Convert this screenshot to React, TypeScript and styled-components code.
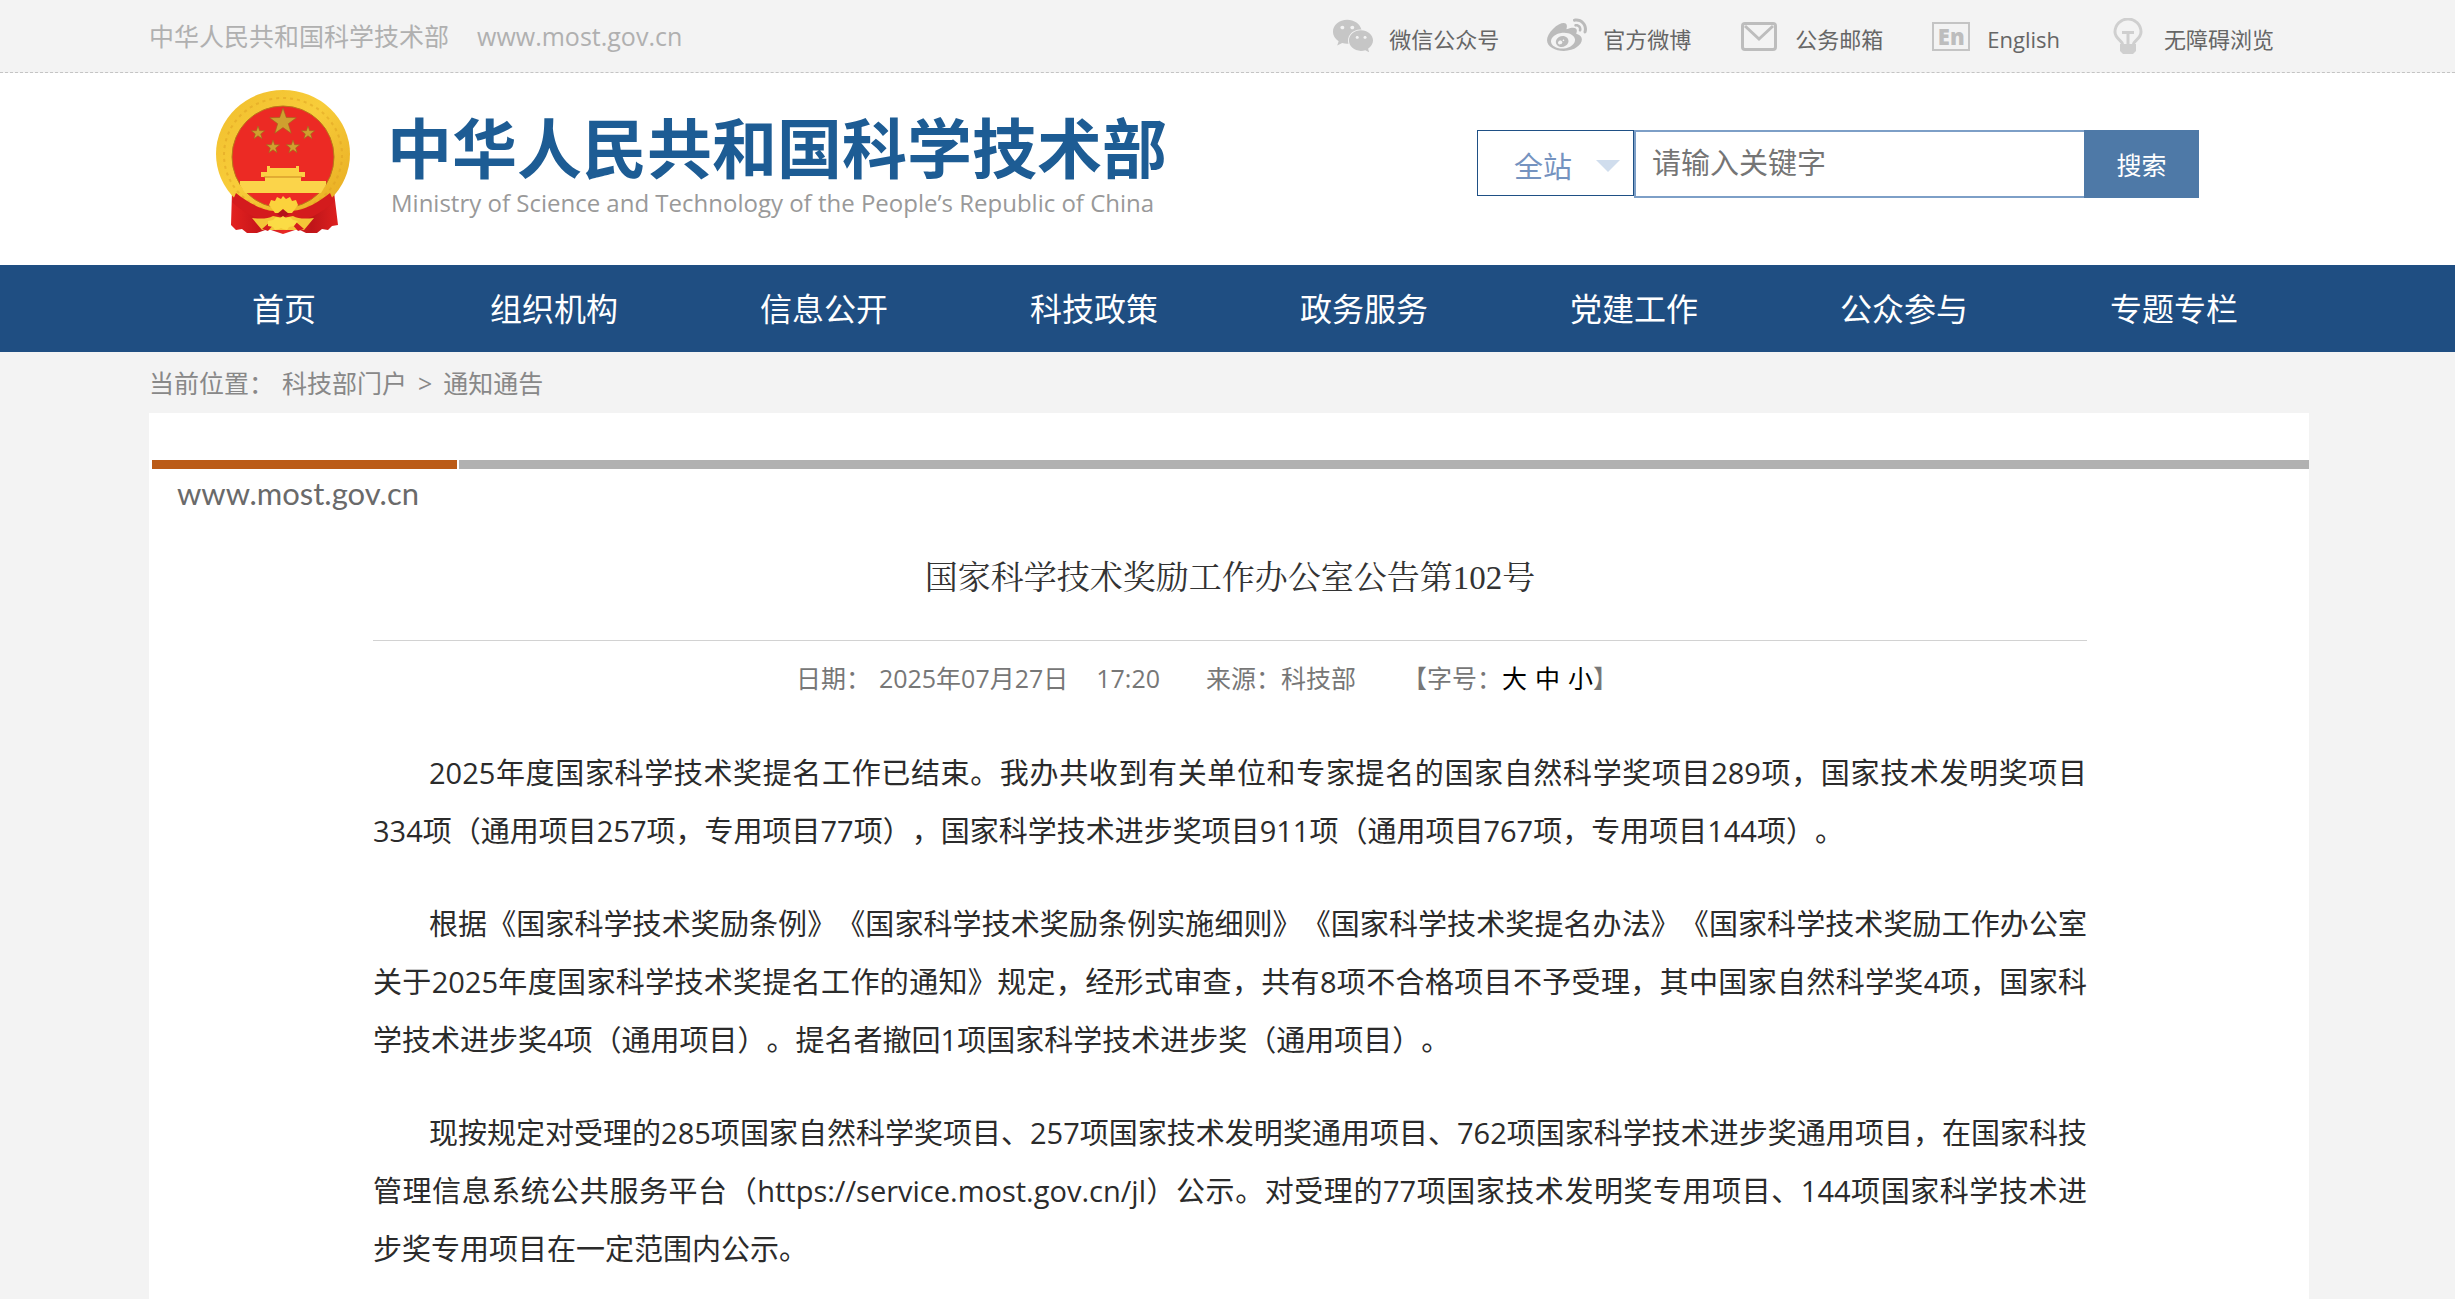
import React from "react";
import styled, { createGlobalStyle } from "styled-components";
import { FaWeibo, FaWeixin } from "react-icons/fa";

const sans = `"Open Sans", "Noto Sans CJK SC", sans-serif`;

const GlobalStyle = createGlobalStyle`
  *, *::before, *::after { box-sizing: border-box; }
  body {
    margin: 0;
    background: #f3f3f3;
    color: #2b2b2b;
    font-family: ${sans};
    text-spacing-trim: space-all;
  }
  a { color: inherit; text-decoration: none; }
  button, input, select { font-family: inherit; }
`;

const Page = styled.div`
  display: flex;
  flex-direction: column;
  min-height: 100vh;
`;

const gutter = `
  padding-left: 149px;
  padding-right: 146px;
`;

const TopBar = styled.div`
  ${gutter}
  display: flex;
  justify-content: space-between;
  align-items: center;
  height: 73px;
  border-bottom: 1px dashed #c4c4c4;
`;

const SiteName = styled.div`
  display: flex;
  gap: 28px;
  font-size: 25px;
  line-height: 36px;
  color: #b0b0b0;
`;

const QuickLinks = styled.nav`
  display: flex;
  gap: 48px;
  padding-right: 35px;
`;

const QuickLink = styled.a`
  display: flex;
  align-items: center;
  gap: 16px;
  font-size: 22px;
  line-height: 32px;
  color: #666;

  span.label { padding-top: 6px; }
`;

const IconBox = styled.span<{ $tone: string }>`
  display: flex;
  justify-content: center;
  width: 40px;
  color: ${(p) => p.$tone};

  svg { flex: none; }
`;

const EnBadge = styled.span`
  display: flex;
  justify-content: center;
  align-items: center;
  width: 38px;
  height: 29px;
  border: 2px solid #c4c4c4;
  color: #bdbdbd;
  font-size: 22px;
  font-weight: 800;
  line-height: 22px;
`;

const Header = styled.header`
  display: flex;
  justify-content: space-between;
  align-items: flex-start;
  padding: 17px 256px 31px 216px;
  background: #fff;
`;

const Brand = styled.a`
  display: flex;
  gap: 37px;
`;

const BrandText = styled.div`
  display: flex;
  flex-direction: column;
  padding-top: 17px;
`;

const BrandName = styled.span`
  font-family: "Noto Sans CJK SC", sans-serif;
  font-size: 65px;
  line-height: 76px;
  font-weight: 700;
  color: #1d5c94;
  white-space: nowrap;
`;

const BrandEnglish = styled.span`
  padding-left: 4px;
  font-size: 24px;
  line-height: 40px;
  color: #999;
  white-space: nowrap;
`;

const SearchForm = styled.form`
  display: flex;
  align-items: flex-start;
  padding-top: 40px;
`;

const ScopeField = styled.label`
  position: relative;
  display: block;

  &::after {
    content: "";
    position: absolute;
    top: 30px;
    right: 14px;
    border: 12px solid transparent;
    border-top-color: #d0dded;
    border-bottom-width: 0;
    pointer-events: none;
  }
`;

const ScopeSelect = styled.select`
  appearance: none;
  display: block;
  width: 157px;
  height: 66px;
  padding: 6px 0 0 36px;
  border: 1px solid #1f5085;
  border-radius: 0;
  background: #fff;
  color: #7593c0;
  font-size: 29px;
`;

const SearchInput = styled.input`
  width: 450px;
  height: 68px;
  padding: 0 16px 4px;
  border: 2px solid #7d9fc7;
  border-right: 0;
  border-radius: 0;
  font-size: 29px;
  color: #444;

  &::placeholder { color: #757575; }
`;

const SearchButton = styled.button`
  width: 115px;
  height: 68px;
  padding: 0;
  border: 0;
  background: #4e79a7;
  color: #fff;
  font-size: 25px;
`;

const MainNav = styled.nav`
  ${gutter}
  display: flex;
  background: #1f4e82;

  a {
    flex: 1;
    padding: 2px 0 1px;
    text-align: center;
    font-size: 32px;
    line-height: 84px;
    color: #fff;
  }
`;

const Breadcrumb = styled.nav`
  ${gutter}
  display: flex;
  gap: 11px;
  padding-top: 1px;
  font-size: 25px;
  line-height: 60px;
  color: #888;

  span:first-child { margin-right: -3px; }
`;

const Main = styled.main`
  ${gutter}
  display: flex;
  flex: 1;
`;

const Card = styled.article`
  flex: 1;
  padding: 47px 0 20px;
  background: #fff;
`;

const Stripe = styled.div`
  display: flex;
  gap: 2px;
  height: 9px;
  padding-left: 3px;
`;

const StripePart = styled.span<{ $accent?: boolean }>`
  flex: ${(p) => (p.$accent ? "0 0 305px" : "1")};
  background: ${(p) => (p.$accent ? "#bb5b17" : "#b1b1b1")};
`;

const Domain = styled.div`
  padding: 6px 0 0 28px;
  font-family: Lato, sans-serif;
  font-size: 31px;
  line-height: 36px;
  color: #6a6a6a;
`;

const Content = styled.div`
  padding: 0 222px 0 224px;
`;

const Title = styled.h1`
  margin: 0;
  padding: 42px 0 37px;
  border-bottom: 1px solid #d2d2d2;
  text-align: center;
  font-family: "Liberation Serif", "Noto Serif CJK SC", "Noto Sans CJK SC", serif;
  font-size: 33px;
  font-weight: 400;
  line-height: 50px;
  color: #333;
`;

const Meta = styled.div`
  display: flex;
  justify-content: center;
  gap: 46px;
  padding: 18px 46px 0 0;
  font-size: 25px;
  line-height: 38px;
  color: #777;
`;

const MetaGroup = styled.span<{ $gap?: number }>`
  display: flex;
  gap: ${(p) => p.$gap ?? 0}px;
`;

const SizeButton = styled.button`
  padding: 0;
  border: 0;
  background: none;
  font-size: 25px;
  line-height: 38px;
  color: #000;
`;

const Body = styled.div`
  padding-top: 47px;
`;

const Paragraph = styled.p`
  margin: 0 0 35px;
  text-indent: 56px;
  text-align: justify;
  font-size: 29px;
  line-height: 58px;
  color: #2b2b2b;

  &:last-child { margin-bottom: 0; }
`;

const starPoints = (cx: number, cy: number, r: number) =>
  Array.from({ length: 10 }, (_, i) => {
    const radius = i % 2 ? r * 0.4 : r;
    const angle = (Math.PI * i) / 5 - Math.PI / 2;
    return `${(cx + radius * Math.cos(angle)).toFixed(1)},${(cy + radius * Math.sin(angle)).toFixed(1)}`;
  }).join(" ");

const Emblem = () => (
  <svg width="134" height="144" viewBox="0 0 134 144" aria-hidden="true">
    <defs>
      <linearGradient id="gold" x1="0" y1="0" x2="1" y2="1">
        <stop offset="0" stopColor="#f0bd2c" />
        <stop offset="0.45" stopColor="#f8cd3a" />
        <stop offset="1" stopColor="#e6a81f" />
      </linearGradient>
      <linearGradient id="drape" x1="0" y1="0" x2="1" y2="0">
        <stop offset="0" stopColor="#e3211f" />
        <stop offset="0.3" stopColor="#c4141a" />
        <stop offset="0.5" stopColor="#ea2a24" />
        <stop offset="0.75" stopColor="#bf1519" />
        <stop offset="1" stopColor="#dd201f" />
      </linearGradient>
    </defs>
    <path d="M16 102l5-2 24 20h44l24-20 5 2 4 33-6 1-4 4-6-1-5 4H90l-8-4-15 5-15-5-11 4H31l-5-4-6 1-5-5z" fill="url(#drape)" />
    <ellipse cx="67" cy="64" rx="67" ry="64" fill="url(#gold)" />
    <ellipse cx="67" cy="65" rx="59" ry="57" fill="none" stroke="#dd9f22" strokeWidth="2" strokeDasharray="3 4" opacity="0.5" />
    <ellipse cx="67" cy="67" rx="51" ry="51" fill="#ec2a24" stroke="#b9771a" strokeWidth="1" />
    <g fill="#cfa02f" stroke="#9a6a1c" strokeWidth="0.6">
      <polygon points={starPoints(67, 32, 14)} />
      <polygon points={starPoints(42, 43, 7)} />
      <polygon points={starPoints(92, 43, 7)} />
      <polygon points={starPoints(57, 57, 7)} />
      <polygon points={starPoints(77, 57, 7)} />
    </g>
    <path d="M51 76h3v2h26v-2h3v6h6v5H45v-5h6z" fill="#fbd044" />
    <path d="M49 87h36v4h25v4l-5 8H29l-5-8v-4h25z" fill="#fbd44a" />
    <path d="M48 87h38" stroke="#c9861e" strokeWidth="1" />
    <path d="M20 103c10 8 24 17 38 18h18c14-1 28-10 38-18l4 9c-12 11-27 19-42 19H58c-15 0-30-8-42-19z" fill="#d41b1d" />
    <path d="M53 115l2-5 4 1 2-4 4 2 2-3 3 3 4-2 2 4 4-1 2 5-6 8H59z" fill="#fbd23c" />
    <path d="M61 124l6-5 6 5-6 4z" fill="#b5121a" />
    <path d="M36 128c8 1 16 1 21-2l10 2 10-2c5 3 13 3 21 2l-10 12H46z" fill="#f4c638" />
    <path d="M46 139l8-7 5 1-7 8zM88 139l-8-7-5 1 7 8z" fill="#d51c1d" />
    <path d="M52 131l5-1 3-3 4 1 3-2 3 2 4-1 3 3 5 1-4 5-5 1-2 3-4-1-2-1-2 1-4 1-2-3-5-1z" fill="#fbdc45" />
  </svg>
);

const MailIcon = () => (
  <svg width="36" height="29" viewBox="0 0 36 29" fill="none" stroke="#bdbdbd" aria-hidden="true">
    <rect x="1.5" y="1.5" width="33" height="26" rx="2.5" strokeWidth="3" />
    <path d="M4 4l14 13L32 4" strokeWidth="3" />
  </svg>
);

const BulbIcon = () => (
  <svg width="30" height="36" viewBox="0 0 30 36" fill="none" stroke="#cfcfcf" aria-hidden="true">
    <path d="M9.5 26c0-3-7.5-5.5-7.5-12a13 13 0 0 1 26 0c0 6.5-7.5 9-7.5 12" strokeWidth="3" />
    <path d="M7 26h16v7l-3 3H10l-3-3z" fill="#cfcfcf" stroke="none" />
    <path d="M9 14.5h12M15 14.5V26" strokeWidth="3" />
  </svg>
);

const quickLinks = [
  { label: "微信公众号", tone: "#c6c6c6", icon: <FaWeixin size={42} /> },
  { label: "官方微博", tone: "#bbb", icon: <FaWeibo size={40} /> },
  { label: "公务邮箱", tone: "#bdbdbd", icon: <MailIcon /> },
  { label: "English", tone: "#bdbdbd", icon: <EnBadge aria-hidden="true">En</EnBadge> },
  { label: "无障碍浏览", tone: "#cfcfcf", icon: <BulbIcon /> },
];

const navItems = ["首页", "组织机构", "信息公开", "科技政策", "政务服务", "党建工作", "公众参与", "专题专栏"];

const paragraphs = [
  "2025年度国家科学技术奖提名工作已结束。我办共收到有关单位和专家提名的国家自然科学奖项目289项，国家技术发明奖项目334项（通用项目257项，专用项目77项），国家科学技术进步奖项目911项（通用项目767项，专用项目144项）。",
  "根据《国家科学技术奖励条例》《国家科学技术奖励条例实施细则》《国家科学技术奖提名办法》《国家科学技术奖励工作办公室关于2025年度国家科学技术奖提名工作的通知》规定，经形式审查，共有8项不合格项目不予受理，其中国家自然科学奖4项，国家科学技术进步奖4项（通用项目）。提名者撤回1项国家科学技术进步奖（通用项目）。",
  "现按规定对受理的285项国家自然科学奖项目、257项国家技术发明奖通用项目、762项国家科学技术进步奖通用项目，在国家科技管理信息系统公共服务平台（https://service.most.gov.cn/jl）公示。对受理的77项国家技术发明奖专用项目、144项国家科学技术进步奖专用项目在一定范围内公示。",
];

export default function App() {
  return (
    <Page>
      <GlobalStyle />
      <TopBar>
        <SiteName>
          <span>中华人民共和国科学技术部</span>
          <span>www.most.gov.cn</span>
        </SiteName>
        <QuickLinks>
          {quickLinks.map((link) => (
            <QuickLink href="#" key={link.label}>
              <IconBox $tone={link.tone}>{link.icon}</IconBox>
              <span className="label">{link.label}</span>
            </QuickLink>
          ))}
        </QuickLinks>
      </TopBar>

      <Header>
        <Brand href="#">
          <Emblem />
          <BrandText>
            <BrandName>中华人民共和国科学技术部</BrandName>
            <BrandEnglish>Ministry of Science and Technology of the People’s Republic of China</BrandEnglish>
          </BrandText>
        </Brand>
        <SearchForm onSubmit={(e) => e.preventDefault()}>
          <ScopeField>
            <ScopeSelect aria-label="搜索范围" defaultValue="all">
              <option value="all">全站</option>
            </ScopeSelect>
          </ScopeField>
          <SearchInput type="text" aria-label="关键字" placeholder="请输入关键字" />
          <SearchButton type="submit">搜索</SearchButton>
        </SearchForm>
      </Header>

      <MainNav>
        {navItems.map((item) => (
          <a href="#" key={item}>{item}</a>
        ))}
      </MainNav>

      <Breadcrumb>
        <span>当前位置：</span>
        <a href="#">科技部门户</a>
        <span>&gt;</span>
        <a href="#">通知通告</a>
      </Breadcrumb>

      <Main>
        <Card>
          <Stripe>
            <StripePart $accent />
            <StripePart />
          </Stripe>
          <Domain>www.most.gov.cn</Domain>
          <Content>
            <Title>国家科学技术奖励工作办公室公告第102号</Title>
            <Meta>
              <MetaGroup $gap={8}>
                <span>日期：</span>
                <MetaGroup $gap={28}>
                  <span>2025年07月27日</span>
                  <span>17:20</span>
                </MetaGroup>
              </MetaGroup>
              <span>来源：科技部</span>
              <MetaGroup>
                <span>【字号：</span>
                <MetaGroup $gap={8}>
                  <SizeButton type="button">大</SizeButton>
                  <SizeButton type="button">中</SizeButton>
                  <SizeButton type="button">小</SizeButton>
                </MetaGroup>
                <span>】</span>
              </MetaGroup>
            </Meta>
            <Body>
              {paragraphs.map((text) => (
                <Paragraph key={text}>{text}</Paragraph>
              ))}
            </Body>
          </Content>
        </Card>
      </Main>
    </Page>
  );
}
